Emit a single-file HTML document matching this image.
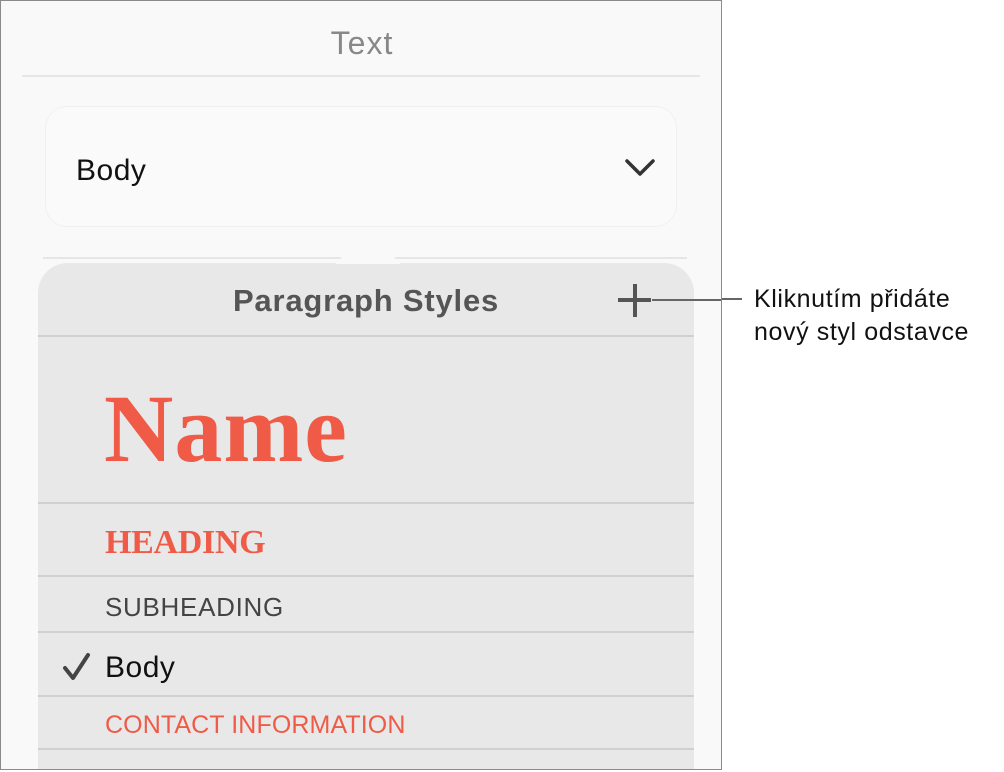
<!DOCTYPE html>
<html><head><meta charset="utf-8"><style>
body{margin:0;width:1004px;height:772px;background:#fff;position:relative;overflow:hidden;font-family:"Liberation Sans",sans-serif}
.a{position:absolute}
.wrap{position:absolute;left:0;top:0;width:720px;height:768px;border:1px solid #8a8a8a;background:#f9f9f9;overflow:hidden}
.t{white-space:nowrap}
.hr{position:absolute;left:37px;width:656px;height:2px;background:#d0d0d0}
</style></head><body>
<div class="wrap">
<div class="a t" style="left:0;width:722px;text-align:center;top:24px;font-size:32px;color:#888;letter-spacing:1px">Text</div>
<div class="a" style="left:21px;top:74px;width:678px;height:2px;background:#e6e6e6"></div>
<div class="a" style="left:44px;top:105px;width:630px;height:119px;border:1px solid #f0f0f0;border-radius:22px;background:#fafafa"></div>
<div class="a t" style="left:75px;top:153px;font-size:30px;color:#111;letter-spacing:0.5px">Body</div>
<svg class="a" style="left:622px;top:156px" width="34" height="22"><path d="M4 4 L17 17 L30 4" fill="none" stroke="#333" stroke-width="3.5" stroke-linecap="round" stroke-linejoin="round"/></svg>
<div class="a" style="left:42px;top:256px;width:644px;height:2px;background:#e6e6e6"></div>
<div class="a" style="left:37px;top:262px;width:656px;height:520px;background:#e8e8e8;border-radius:30px 30px 0 0"></div>
<svg class="a" style="left:334px;top:231px" width="66" height="33"><path d="M0 32 L28 5 Q33 0 38 5 L66 32 Z" fill="#f9f9f9"/></svg>
<div class="a t" style="left:37px;width:656px;text-align:center;top:282px;font-size:31px;font-weight:bold;color:#555;letter-spacing:0.8px">Paragraph Styles</div>
<div class="a" style="left:617px;top:297px;width:33px;height:4px;background:#555"></div>
<div class="a" style="left:632px;top:283px;width:4px;height:33px;background:#555"></div>
<div class="a" style="left:651px;top:298px;width:80px;height:2px;background:#666"></div>
<div class="hr" style="top:334px"></div>
<div class="a t" style="left:103px;top:372px;font-family:'Liberation Serif',serif;font-weight:bold;font-size:96px;color:#ef5b47;letter-spacing:1px">Name</div>
<div class="hr" style="top:501px"></div>
<div class="a t" style="left:104px;top:523px;font-family:'Liberation Serif',serif;font-weight:bold;font-size:34px;color:#ef5b47;letter-spacing:-0.3px">HEADING</div>
<div class="hr" style="top:574px"></div>
<div class="a t" style="left:104px;top:591px;font-size:26px;color:#444;letter-spacing:0.7px">SUBHEADING</div>
<div class="hr" style="top:630px"></div>
<svg class="a" style="left:59px;top:651px" width="34" height="30"><path d="M5 16 L13 26 L28 3" fill="none" stroke="#444" stroke-width="4" stroke-linecap="round" stroke-linejoin="round"/></svg>
<div class="a t" style="left:104px;top:650px;font-size:30px;color:#111;letter-spacing:0.5px">Body</div>
<div class="hr" style="top:694px"></div>
<div class="a t" style="left:104px;top:710px;font-size:25px;color:#ef5b47;letter-spacing:0.1px">CONTACT INFORMATION</div>
<div class="hr" style="top:747px"></div>
</div>
<div class="a" style="left:722px;top:298px;width:20px;height:2px;background:#666"></div>
<div class="a t" style="left:754px;top:283px;font-size:25px;color:#111;line-height:33px;letter-spacing:0.6px">Kliknutím přidáte<br>nový styl odstavce</div>
</body></html>
